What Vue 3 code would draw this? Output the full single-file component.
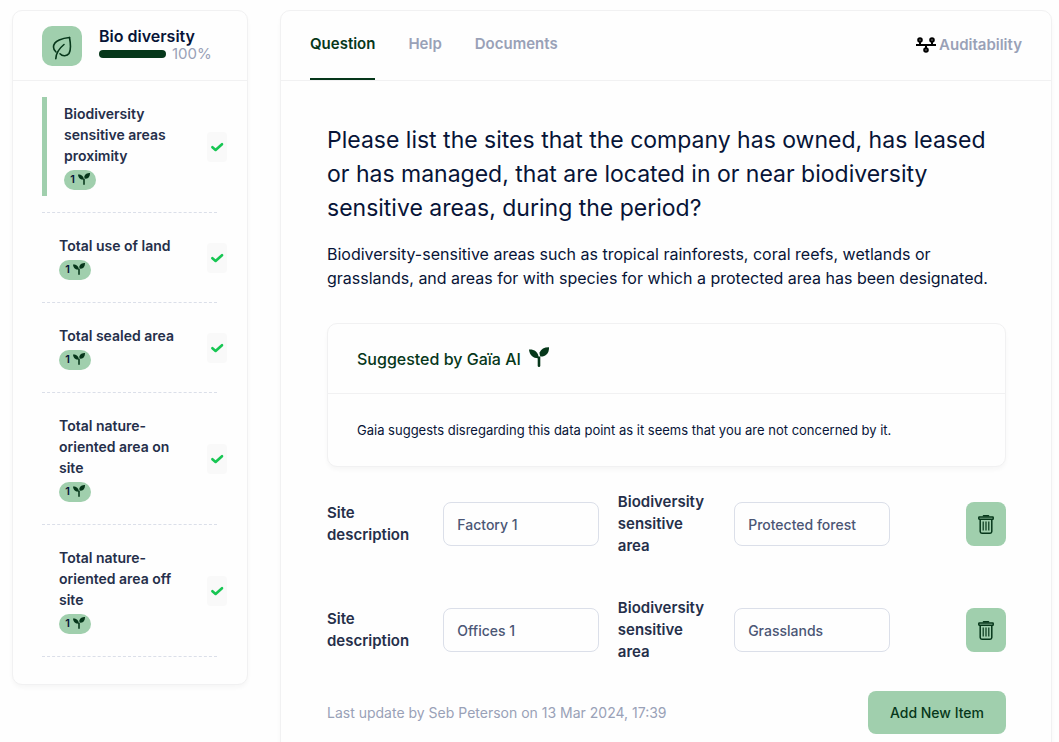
<script setup>
import { ref } from 'vue'

const topics = ref([
  { id: 1, label: 'Biodiversity sensitive areas proximity', count: 1, active: true },
  { id: 2, label: 'Total use of land', count: 1 },
  { id: 3, label: 'Total sealed area', count: 1 },
  { id: 4, label: 'Total nature-oriented area on site', count: 1 },
  { id: 5, label: 'Total nature-oriented area off site', count: 1 },
])

const tabs = ['Question', 'Help', 'Documents']
const activeTab = ref('Question')
const progress = 100

const sites = ref([
  { id: 1, description: 'Factory 1', area: 'Protected forest' },
  { id: 2, description: 'Offices 1', area: 'Grasslands' },
])

function addSite() {
  sites.value.push({ id: Date.now(), description: '', area: '' })
}
function removeSite(id) {
  sites.value = sites.value.filter((s) => s.id !== id)
}
</script>

<template>
  <svg class="sprite" width="0" height="0" aria-hidden="true">
    <symbol id="seedling" viewBox="0 0 20 20">
      <path d="M0 2.6C4.6 2.2 9.6 4.6 9.7 11.2C5 11.6 0.4 9 0 2.6Z" />
      <path d="M20 0.2C20.2 6 17 9.8 11.4 9.6C10.6 8 10.4 6.8 10.6 5.4C12 1.8 15.5 0.1 20 0.2Z" />
      <path d="M8.700 9.500H11.300V18.800Q11.300 20 10 20Q8.700 20 8.700 18.800Z" />
    </symbol>
  </svg>

  <div class="page">
    <aside class="card sidebar">
      <header class="topic-head">
        <span class="topic-icon">
          <svg width="20" height="24" viewBox="0 0 20 24" fill="none" stroke="#06371a" stroke-width="1.6" stroke-linecap="round" stroke-linejoin="round">
            <path d="M17.500 1.500C11.500 2 1.500 4.500 1.500 11C1.500 13.500 2.500 14.800 4 16" />
            <path d="M17.500 1.500C18.500 7 19.500 13.500 17 17.500C15.200 20.200 10.500 20.600 8 17.800" />
            <path d="M3.800 22.800C4 17.500 7 12.500 12 8.500" />
          </svg>
        </span>
        <div class="topic-info">
          <h2>Bio diversity</h2>
          <div class="progress">
            <span class="track"><span class="fill" :style="{ width: progress + '%' }"></span></span>
            <span class="percent">{{ progress }}%</span>
          </div>
        </div>
      </header>
      <ul class="topics">
        <li v-for="t in topics" :key="t.id">
          <div class="topic" :class="{ active: t.active }">
            <div class="topic-text">
              <a href="#">{{ t.label }}</a>
              <span class="badge">{{ t.count }}<svg width="12" height="12"><use href="#seedling" /></svg></span>
            </div>
            <span class="check">
              <svg width="14" height="10" viewBox="0 0 14 10" fill="none" stroke="#17c653" stroke-width="2.600" stroke-linecap="round" stroke-linejoin="round">
                <path d="M2.400 5.200L5.600 8L12 2.200" />
              </svg>
            </span>
          </div>
        </li>
      </ul>
    </aside>

    <main class="card main">
      <header class="main-head">
        <nav class="tabs">
          <a v-for="tab in tabs" :key="tab" href="#" :class="{ current: tab === activeTab }" @click.prevent="activeTab = tab">{{ tab }}</a>
        </nav>
        <a href="#" class="audit">
          <svg width="20" height="16" viewBox="0 0 20 16" fill="none" stroke="#000" stroke-width="2">
            <path d="M0 8H20M4 4V8M16 4V8M10 8V12" />
            <circle cx="4" cy="3" r="1.800" fill="#888" />
            <circle cx="16" cy="3" r="1.800" fill="#888" />
            <circle cx="10" cy="13" r="1.800" fill="#888" />
          </svg>
          Auditability
        </a>
      </header>

      <div class="content">
        <h1>Please list the sites that the company has owned, has leased or has managed, that are located in or near biodiversity sensitive areas, during the period?</h1>
        <p class="description">Biodiversity-sensitive areas such as tropical rainforests, coral reefs, wetlands or grasslands, and areas for with species for which a protected area has been designated.</p>

        <section class="card suggestion">
          <h3>Suggested by Gaïa AI <svg width="20" height="20"><use href="#seedling" /></svg></h3>
          <p>Gaia suggests disregarding this data point as it seems that you are not concerned by it.</p>
        </section>

        <form class="sites" @submit.prevent>
          <div v-for="s in sites" :key="s.id" class="site">
            <label :for="'description-' + s.id">Site description</label>
            <input :id="'description-' + s.id" v-model="s.description" type="text" />
            <label :for="'area-' + s.id">Biodiversity sensitive area</label>
            <input :id="'area-' + s.id" v-model="s.area" type="text" />
            <button type="button" class="remove" aria-label="Remove item" @click="removeSite(s.id)">
              <svg width="16" height="19" viewBox="0 0 16 19" fill="none" stroke="#06371a" stroke-width="1.500" stroke-linejoin="round">
                <path d="M5.500 1.600V0.800H10.500V1.600" />
                <rect x="0.800" y="1.900" width="14.400" height="2.300" rx="0.500" />
                <path d="M2.200 4.200V16.500Q2.200 18.200 3.900 18.200H12.100Q13.800 18.200 13.800 16.500V4.200" />
                <path d="M5.200 6.500V15.500M8 6.500V15.500M10.800 6.500V15.500" stroke-width="1.200" />
              </svg>
            </button>
          </div>
        </form>

        <footer class="foot">
          <span>Last update by Seb Peterson on 13 Mar 2024, 17:39</span>
          <button type="button" class="add" @click="addSite">Add New Item</button>
        </footer>
      </div>
    </main>
  </div>
</template>

<style>
body {
  background: #fefefe;
}
</style>

<style scoped>
.sprite {
  position: absolute;
}
.page {
  display: flex;
  align-items: flex-start;
  gap: 32px;
  padding: 10px 7px 0 12px;
  font-family: Inter, "Liberation Sans", sans-serif;
  font-size: 14px;
  color: #071437;
}
.page * {
  box-sizing: border-box;
}
h1, h2, h3, p, ul {
  margin: 0;
  padding: 0;
}
a {
  color: inherit;
  text-decoration: none;
}
svg {
  display: block;
  flex: none;
}
.card {
  border: 1px solid #f1f1f2;
  border-radius: 10px;
  background: #fefefe;
  box-shadow: 0 3px 4px rgba(0, 0, 0, 0.03);
}
.sidebar {
  flex: 0 0 236px;
}
.topic-head {
  display: flex;
  align-items: center;
  gap: 17px;
  height: 70px;
  padding: 0 29px;
  border-bottom: 1px solid #f1f1f2;
}
.topic-icon {
  display: flex;
  align-items: center;
  justify-content: center;
  width: 40px;
  height: 40px;
  padding-top: 4px;
  border-radius: 10px;
  background: #a0cfad;
}
.topic-info {
  padding-bottom: 2px;
}
.topic-info h2 {
  font-size: 16px;
  font-weight: 600;
  line-height: 18px;
}
.progress {
  display: flex;
  align-items: center;
  gap: 6px;
  color: #99a1b7;
  line-height: 18px;
  font-size: 15px;
}
.track {
  width: 67px;
  height: 8px;
  border-radius: 4px;
  overflow: hidden;
}
.fill {
  display: block;
  height: 100%;
  background: #06371a;
}
.topics {
  list-style: none;
  padding: 0 30px 27px 29px;
}
.topics li {
  padding: 16px 0;
  border-bottom: 1px dashed #dbdfe9;
}
.topic {
  display: flex;
  align-items: center;
  justify-content: space-between;
  padding: 6px 0 6px 17px;
}
.topic.active {
  border-left: 5px solid #a0cfad;
}
.topic-text {
  flex: 0 1 120px;
}
.topic-text a {
  display: block;
  font-weight: 600;
  line-height: 21px;
  color: #252f4a;
}
.badge {
  display: flex;
  align-items: center;
  justify-content: center;
  gap: 3px;
  width: 32px;
  height: 20px;
  margin-top: 4px;
  padding-bottom: 2px;
  border-radius: 10px;
  background: #a0cfad;
  font-size: 11px;
  font-weight: 600;
  fill: #06371a;
}
.check {
  display: flex;
  flex: none;
  align-items: center;
  justify-content: center;
  width: 20px;
  height: 30px;
  margin-right: -10px;
  border-radius: 4px;
  background: #f9f9f9;
}
.main {
  flex: 1;
  min-width: 0;
}
.main-head {
  display: flex;
  align-items: center;
  justify-content: space-between;
  height: 70px;
  padding: 0 29px;
  border-bottom: 1px solid #f1f1f2;
  font-size: 15px;
  font-weight: 600;
  color: #99a1b7;
}
.tabs {
  display: flex;
  align-self: stretch;
  gap: 33px;
}
.tabs a {
  display: flex;
  align-items: center;
  padding-bottom: 2px;
  border-bottom: 2px solid transparent;
}
.tabs .current {
  color: #06371a;
  border-color: #06371a;
}
.audit {
  display: flex;
  align-items: center;
  gap: 3px;
  padding-bottom: 2px;
}
.content {
  padding: 42px 45px 24px 46px;
}
h1 {
  font-size: 23px;
  font-weight: 400;
  line-height: 34px;
}
.description {
  margin-top: 17px;
  font-size: 16px;
  line-height: 24px;
}
.suggestion {
  margin-top: 33px;
}
.suggestion h3 {
  display: flex;
  align-items: center;
  gap: 8px;
  height: 70px;
  padding: 0 29px;
  border-bottom: 1px solid #f1f1f2;
  font-size: 16px;
  font-weight: 500;
  color: #06371a;
  fill: #06371a;
}
.suggestion h3 svg {
  margin-bottom: 4px;
}
.suggestion p {
  padding: 26px 29px;
  font-size: 13px;
  line-height: 20px;
}
.sites {
  display: grid;
  gap: 40px;
  margin-top: 24px;
}
.site {
  display: grid;
  grid-template-columns: minmax(0, 97fr) minmax(0, 155fr) minmax(0, 97fr) minmax(0, 155fr) minmax(0, 97fr);
  align-items: center;
  gap: 19px;
}
.site label {
  font-size: 15px;
  font-weight: 600;
  line-height: 22px;
  color: #252f4a;
}
.site input {
  width: 100%;
  height: 44px;
  padding: 0 13px;
  border: 1px solid #dbdfe9;
  border-radius: 8px;
  background: #fefefe;
  font: 500 14px Inter, "Liberation Sans", sans-serif;
  color: #4b5675;
}
button {
  border: 0;
  border-radius: 8px;
  background: #a0cfad;
  color: #06371a;
  cursor: pointer;
}
.remove {
  display: flex;
  align-items: center;
  justify-content: center;
  justify-self: end;
  width: 40px;
  height: 44px;
  padding: 0;
}
.foot {
  display: flex;
  align-items: center;
  justify-content: space-between;
  margin-top: 28px;
  color: #99a1b7;
}
.add {
  height: 43px;
  padding: 0 22px;
  font: 500 14px Inter, "Liberation Sans", sans-serif;
}
</style>
